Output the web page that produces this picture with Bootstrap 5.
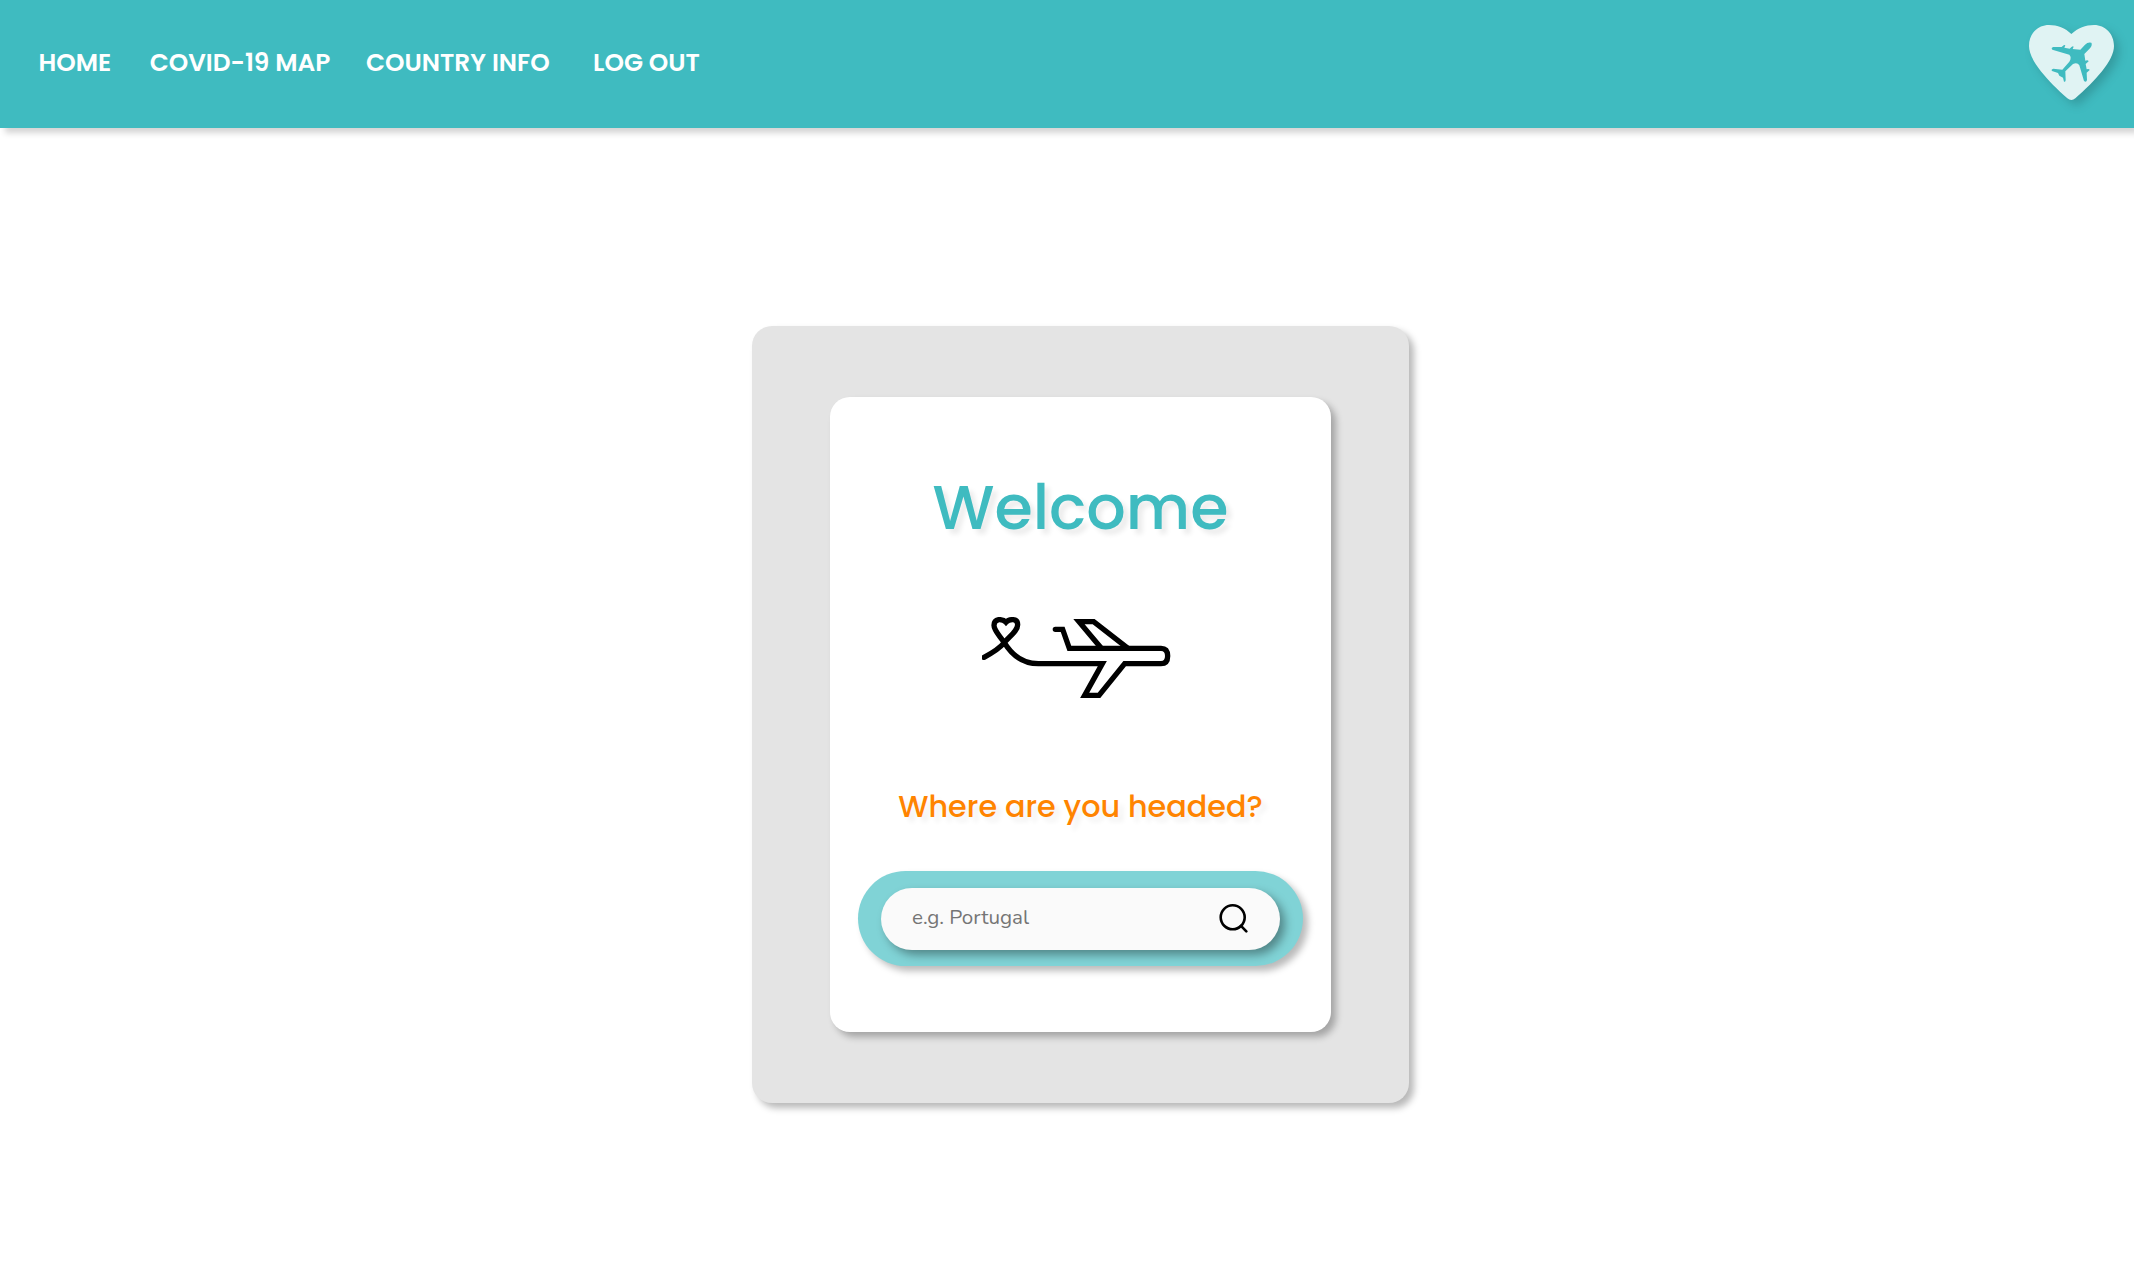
<!DOCTYPE html>
<html lang="en">
<head>
<meta charset="utf-8">
<meta name="viewport" content="width=device-width, initial-scale=1">
<title>Welcome</title>
<link rel="stylesheet" href="https://cdn.jsdelivr.net/npm/bootstrap@5.3.0/dist/css/bootstrap.min.css">
<style>
body{background:#fff;font-family:Poppins,Inter,"Liberation Sans",sans-serif}
.site-bar{height:128px;background:#3fbbc0;box-shadow:5px 5px 6px rgba(0,0,0,.17);padding:0 20px 0 38.5px}
.site-links{padding-bottom:3px}
.site-links .nav-link{color:#fff;font-size:24.8px;font-weight:600;line-height:30px;white-space:nowrap}
.site-links .to-home{margin-right:38.4px}
.site-links .to-map{margin-right:35.6px}
.site-links .to-country{margin-right:43.4px}
.brand-heart{width:85px;height:75px;margin-bottom:3px;overflow:visible;filter:drop-shadow(5px 5px 5px rgba(0,0,0,.17))}
.stage{padding:198px 0 0 27px}
.panel-outer{width:657px;height:777px;padding:71px 78px;background:#e4e4e4;border-radius:20px;box-shadow:5px 5px 7px rgba(0,0,0,.28)}
.panel-inner{width:501px;height:635px;padding-top:79px;background:#fff;border-radius:20px;box-shadow:5px 5px 7px rgba(0,0,0,.28)}
.welcome-title{font-size:62px;font-weight:500;line-height:63px;color:#3fbbc0;text-shadow:5px 5px 5px rgba(0,0,0,.08)}
.plane-art{width:189px;height:81px;margin:78px 9px 0 0}
.question{margin-top:93px;font-size:30.25px;font-weight:500;line-height:31px;color:#ff8400;text-shadow:5px 5px 5px rgba(0,0,0,.06)}
.search-shell{width:445px;height:95px;margin-top:49px;padding:17px 23px 16px;background:#80d3d6;box-shadow:5px 5px 7px rgba(0,0,0,.27)}
.search-pill{height:62px;padding:0 32px 2px 31px;background:#fafafa;box-shadow:5px 5px 10px rgba(0,0,0,.36)}
.search-pill input{width:260px;height:40px;font:400 20.6px Nunito,"Open Sans",sans-serif;margin-bottom:2px;outline:0}
.search-pill input::placeholder{color:#757575;opacity:1}
.search-icon{width:29px;height:29px}
</style>
<script src="https://cdn.jsdelivr.net/npm/bootstrap@5.3.0/dist/js/bootstrap.bundle.min.js"></script>
</head>
<body class="min-vh-100">
<nav class="site-bar d-flex align-items-center justify-content-between">
  <ul class="site-links nav flex-nowrap">
    <li class="nav-item"><a class="nav-link p-0 to-home" href="#">HOME</a></li>
    <li class="nav-item"><a class="nav-link p-0 to-map" href="#">COVID-19 MAP</a></li>
    <li class="nav-item"><a class="nav-link p-0 to-country" href="#">COUNTRY INFO</a></li>
    <li class="nav-item"><a class="nav-link p-0" href="#">LOG OUT</a></li>
  </ul>
  <svg class="brand-heart" viewBox="75 75 255 225" aria-hidden="true">
    <path fill="#e0f3f3" d="M202 102C184 84 160 75 135 75C100 75 75 102 75 138C75 182 132 243 190 295Q202 305 214 295C273 243 330 182 330 138C330 102 304 75 270 75C245 75 222 84 202 102Z"/>
    <path fill="#3fbbc0" d="M262 128Q252 125 243 134L229 149L206 147L209 140Q206 135 197 146L181 143L184 136Q181 132 173 141L148 141Q140 143 145 149L196 164Q204 172 196 185L175 209L148 206Q140 208 144 213L162 219L166 227L177 233L180 245Q185 247 185 240L184 214L207 192Q220 186 226 196L240 243Q247 249 249 240L248 218L257 210Q256 206 248 208L245 192L254 184Q252 179 244 182L241 162L258 145Q266 134 262 128Z"/>
  </svg>
</nav>
<main class="stage d-flex justify-content-center">
  <section class="panel-outer">
    <div class="panel-inner d-flex flex-column align-items-center">
      <h1 class="welcome-title mb-0">Welcome</h1>
      <svg class="plane-art flex-shrink-0" viewBox="66 81 567 243" fill="none" stroke="#000" stroke-width="16" aria-hidden="true">
        <path stroke-linecap="round" d="M72 202C95 190 118 176 133 158C150 138 173 122 173 104Q173 90 160 89Q146 88 138 97Q130 88 116 89Q102 92 102 106C102 122 118 136 133 158C155 194 188 221 235 221H427L374 316H417L494 221H603Q623 221 623 198Q623 175 603 175H328L308 118H286"/>
        <path d="M424 175L357 95H401L504 175"/>
      </svg>
      <h2 class="question mb-0">Where are you headed?</h2>
      <form class="search-shell rounded-pill">
        <div class="search-pill rounded-pill d-flex align-items-center justify-content-between">
          <input class="border-0 bg-transparent p-0" type="text" placeholder="e.g. Portugal" aria-label="Country">
          <svg class="search-icon" viewBox="0 0 29 29" fill="none" stroke="#000" stroke-width="2.6" stroke-linecap="round" aria-hidden="true"><circle cx="13.7" cy="13.3" r="12"/><path d="M22 21.8L27.3 27.4"/></svg>
        </div>
      </form>
    </div>
  </section>
</main>
</body>
</html>
